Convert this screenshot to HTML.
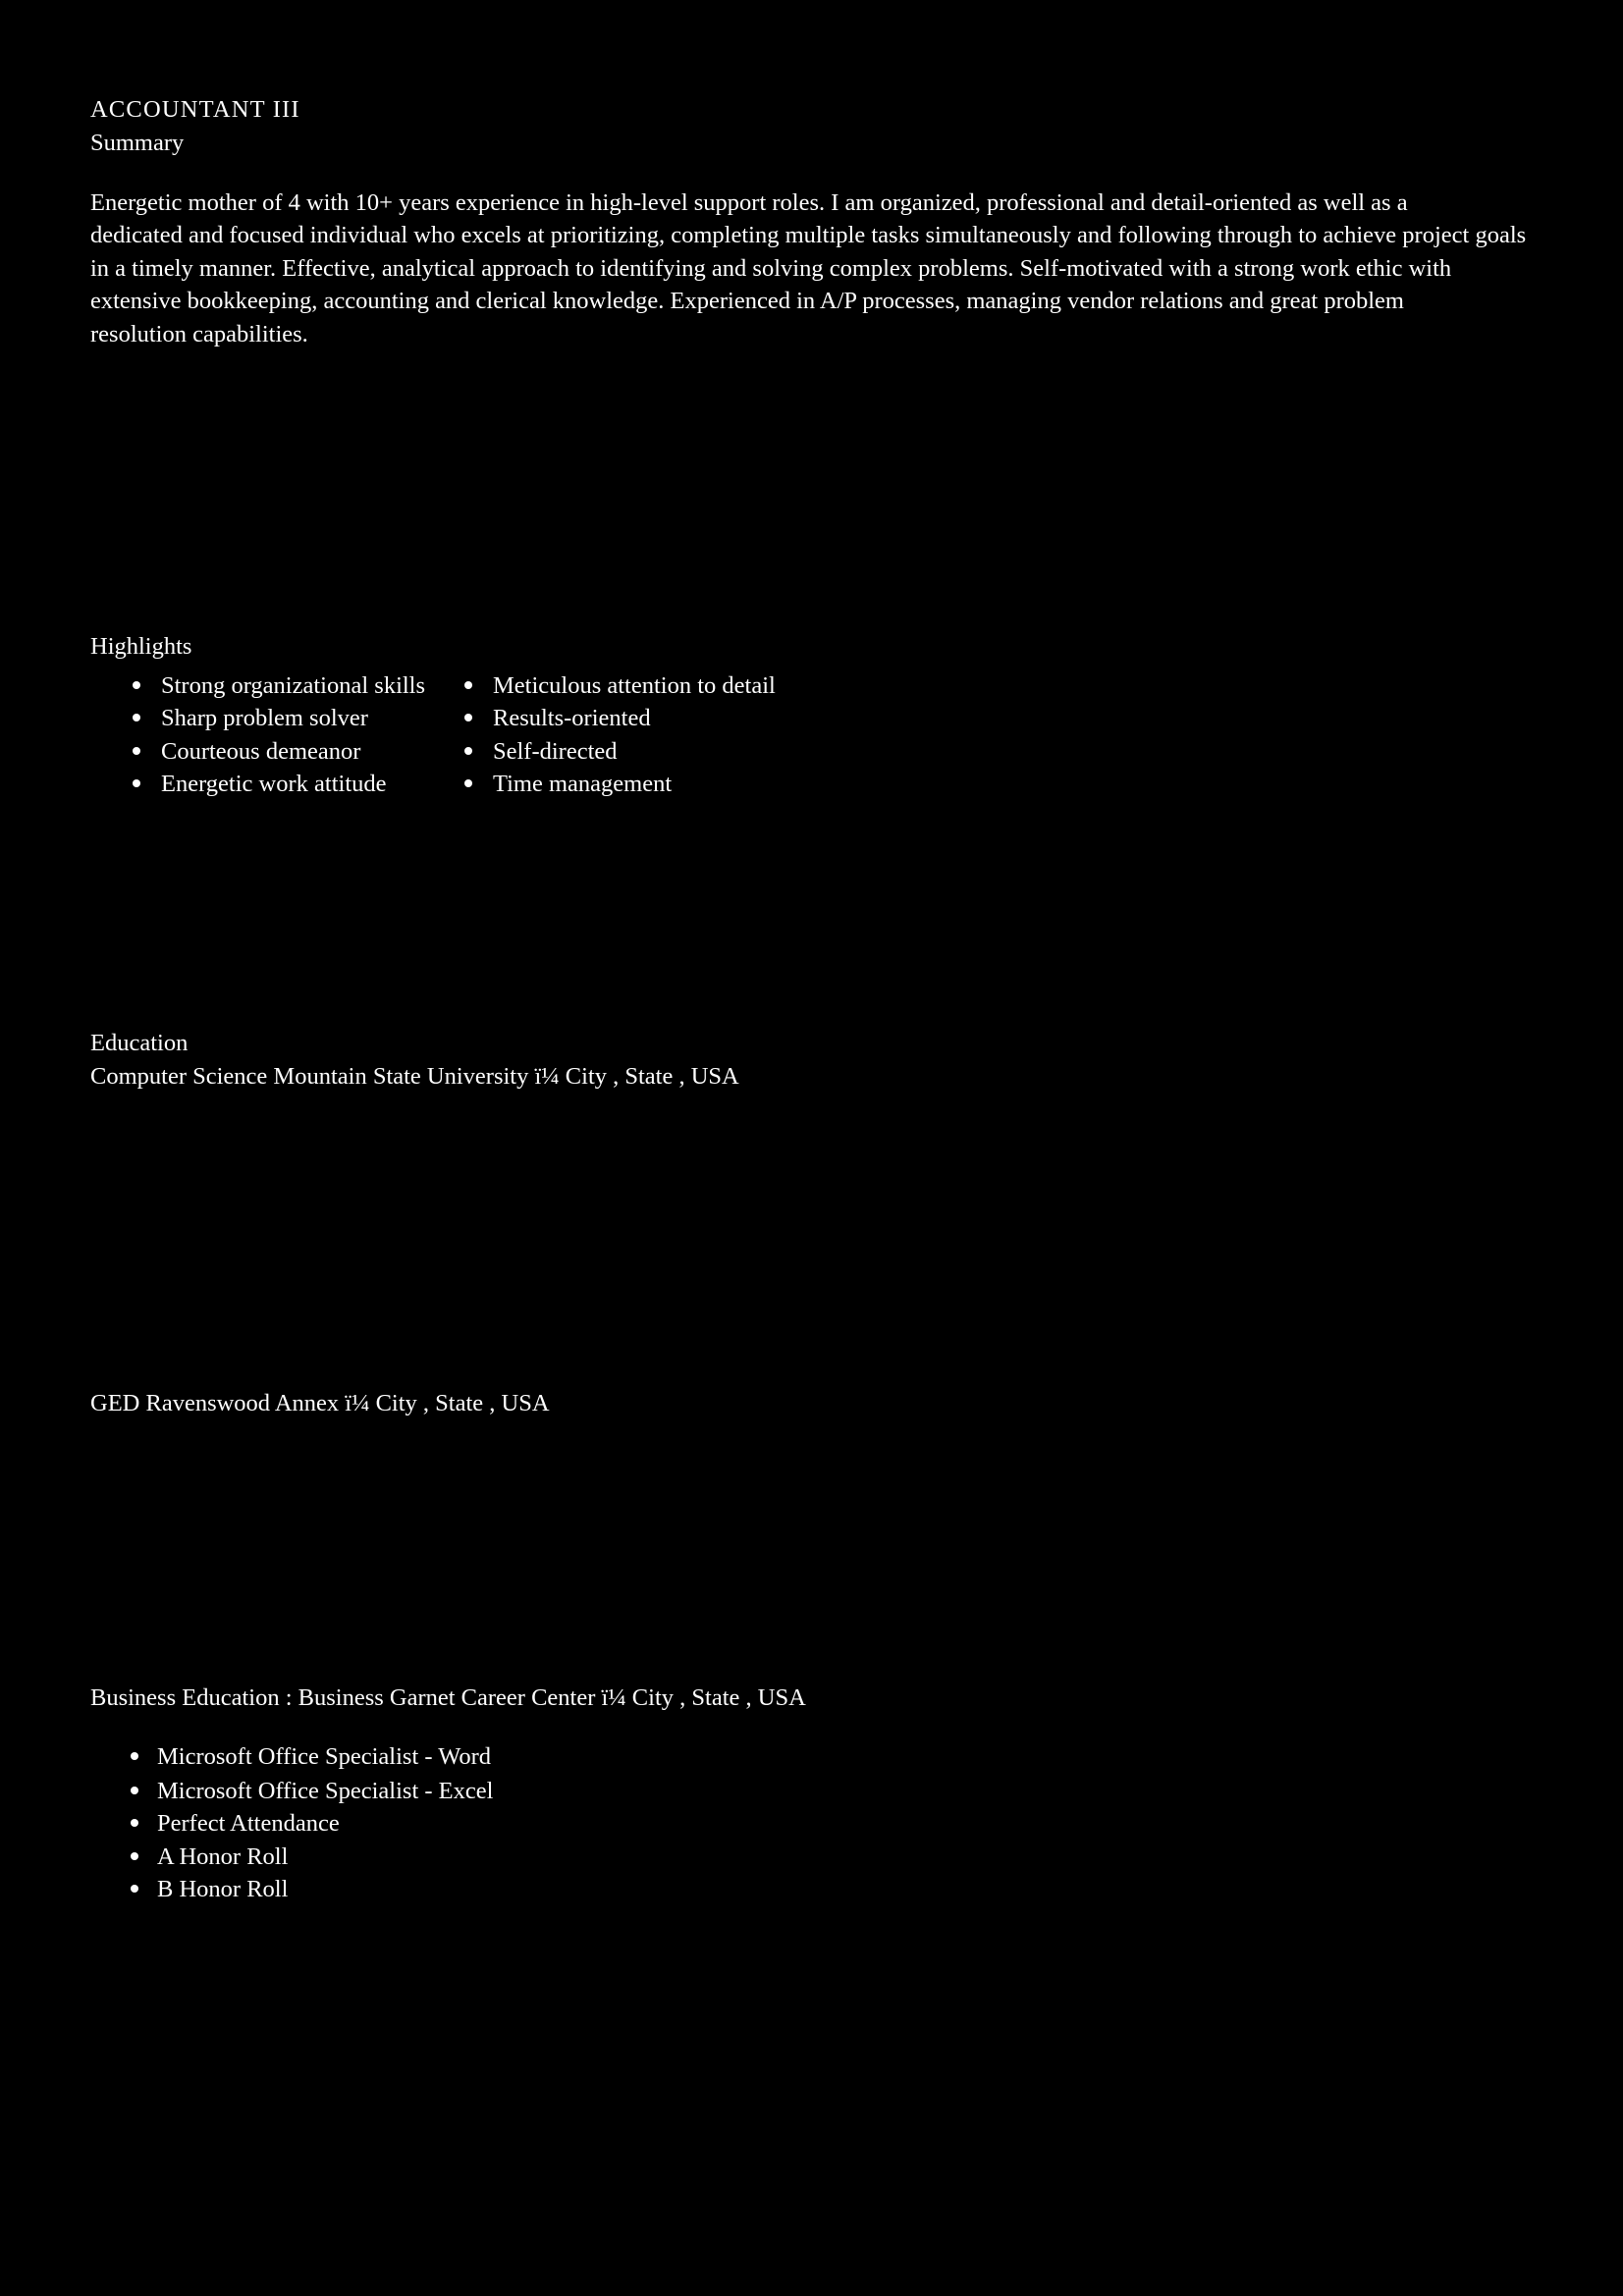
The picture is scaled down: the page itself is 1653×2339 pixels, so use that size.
<!DOCTYPE html>
<html><head><meta charset="utf-8"><style>
html,body{margin:0;padding:0;background:#000;}
body{width:1653px;height:2339px;position:relative;overflow:hidden;color:#fff;font-family:"Liberation Serif",serif;font-size:24.5px;letter-spacing:0;}
.l{position:absolute;white-space:nowrap;line-height:34px;height:34px;}
.b{position:absolute;width:8px;height:8px;border-radius:50%;background:#fff;}
</style></head><body>
<div class="l" style="left:92px;top:95px;letter-spacing:1.2px">ACCOUNTANT III</div>
<div class="l" style="left:92px;top:129px">Summary</div>
<div class="l" style="left:92px;top:190px">Energetic mother of 4 with 10+ years experience in high-level support roles. I am organized, professional and detail-oriented as well as a</div>
<div class="l" style="left:92px;top:223px">dedicated and focused individual who excels at prioritizing, completing multiple tasks simultaneously and following through to achieve project goals</div>
<div class="l" style="left:92px;top:257px">in a timely manner. Effective, analytical approach to identifying and solving complex problems. Self-motivated with a strong work ethic with</div>
<div class="l" style="left:92px;top:290px">extensive bookkeeping, accounting and clerical knowledge. Experienced in A/P processes, managing vendor relations and great problem</div>
<div class="l" style="left:92px;top:324px">resolution capabilities.</div>

<div class="l" style="left:92px;top:642px">Highlights</div>
<div class="b" style="left:135px;top:694px"></div><div class="l" style="left:164px;top:682px">Strong organizational skills</div>
<div class="b" style="left:135px;top:727px"></div><div class="l" style="left:164px;top:715px">Sharp problem solver</div>
<div class="b" style="left:135px;top:761px"></div><div class="l" style="left:164px;top:749px">Courteous demeanor</div>
<div class="b" style="left:135px;top:794px"></div><div class="l" style="left:164px;top:782px">Energetic work attitude</div>
<div class="b" style="left:473px;top:694px"></div><div class="l" style="left:502px;top:682px">Meticulous attention to detail</div>
<div class="b" style="left:473px;top:727px"></div><div class="l" style="left:502px;top:715px">Results-oriented</div>
<div class="b" style="left:473px;top:761px"></div><div class="l" style="left:502px;top:749px">Self-directed</div>
<div class="b" style="left:473px;top:794px"></div><div class="l" style="left:502px;top:782px">Time management</div>

<div class="l" style="left:92px;top:1046px">Education</div>
<div class="l" style="left:92px;top:1080px">Computer Science Mountain State University ï¼ City , State , USA</div>
<div class="l" style="left:92px;top:1413px">GED Ravenswood Annex ï¼ City , State , USA</div>
<div class="l" style="left:92px;top:1713px">Business Education : Business Garnet Career Center ï¼ City , State , USA</div>
<div class="b" style="left:133px;top:1785px"></div><div class="l" style="left:160px;top:1773px">Microsoft Office Specialist - Word</div>
<div class="b" style="left:133px;top:1820px"></div><div class="l" style="left:160px;top:1808px">Microsoft Office Specialist - Excel</div>
<div class="b" style="left:133px;top:1853px"></div><div class="l" style="left:160px;top:1841px">Perfect Attendance</div>
<div class="b" style="left:133px;top:1887px"></div><div class="l" style="left:160px;top:1875px">A Honor Roll</div>
<div class="b" style="left:133px;top:1920px"></div><div class="l" style="left:160px;top:1908px">B Honor Roll</div>
</body></html>
